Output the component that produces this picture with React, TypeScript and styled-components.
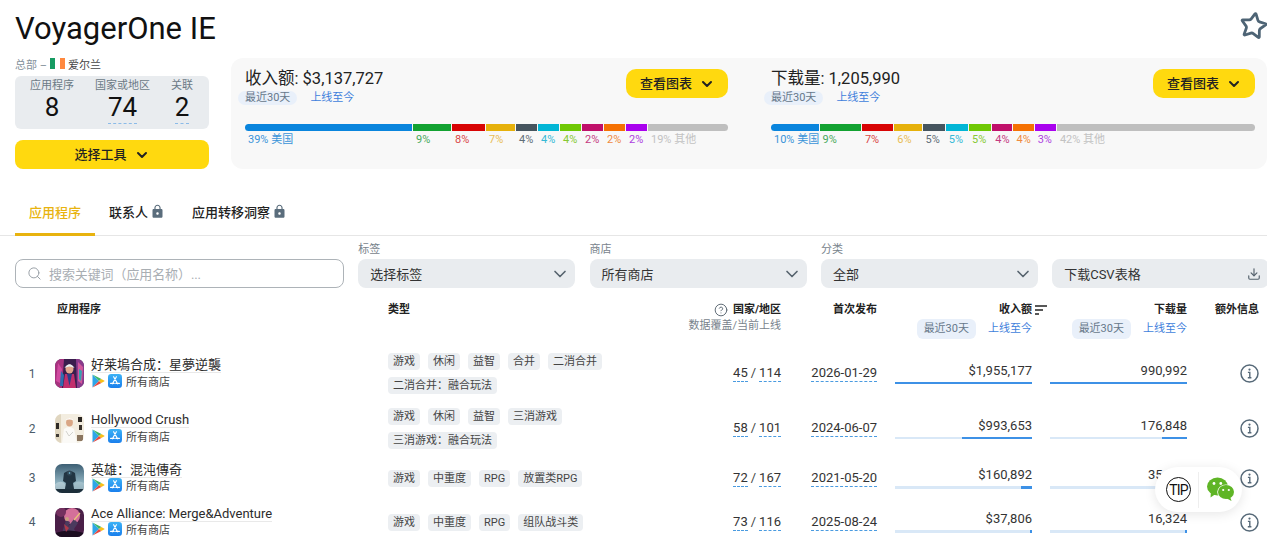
import React from 'react';
import styled, { createGlobalStyle } from 'styled-components';
import { ChevronDown, CircleHelp, Download, Search, Star } from 'lucide-react';
import { MdLock } from 'react-icons/md';

const GlobalStyle = createGlobalStyle`
    html, body {
        margin: 0;
        padding: 0;
        width: 1267px;
        height: 540px;
        overflow: hidden;
        background: #fff;
    }
    body {
        font-family: Roboto, "Noto Sans CJK SC", sans-serif;
        color: #222;
    }
    * {
        box-sizing: border-box;
    }
`;

interface ISegment {
    width: number;
    bar: string;
    text: string;
    label: string;
}

const palette = [
    ['#0a85dd', '#3a94d8'],
    ['#13a232', '#48a95c'],
    ['#d80505', '#d94545'],
    ['#e6b10c', '#e8bd55'],
    ['#46555f', '#5f6d77'],
    ['#02b6d6', '#35b9d6'],
    ['#6fc805', '#86c933'],
    ['#c0106a', '#c53a80'],
    ['#f57103', '#ef8a40'],
    ['#a902ee', '#ae3fe0'],
    ['#bfbfbf', '#c2c2c2'],
];

const makeSegments = (widths: number[], labels: string[]): ISegment[] =>
    widths.map((width, i) => ({ width, bar: palette[i][0], text: palette[i][1], label: labels[i] }));

const revenueSegments = makeSegments(
    [167, 38, 33, 29, 21, 21, 21, 21, 21, 21, 80],
    ['39% 美国', '9%', '8%', '7%', '4%', '4%', '4%', '2%', '2%', '2%', '19% 其他'],
);

const downloadSegments = makeSegments(
    [47, 41, 31, 27, 22, 22, 22, 20, 20, 21, 196],
    ['10% 美国', '9%', '7%', '6%', '5%', '5%', '5%', '4%', '4%', '3%', '42% 其他'],
);

interface IApp {
    name: string;
    tags: string[];
    live: string;
    total: string;
    date: string;
    revenue: string;
    revenueBar: number;
    downloads: string;
    downloadBar: number;
}

const apps: IApp[] = [
    {
        name: '好莱塢合成：星夢逆襲',
        tags: ['游戏', '休闲', '益智', '合并', '二消合并', '二消合并：融合玩法'],
        live: '45',
        total: '114',
        date: '2026-01-29',
        revenue: '$1,955,177',
        revenueBar: 137,
        downloads: '990,992',
        downloadBar: 137,
    },
    {
        name: 'Hollywood Crush',
        tags: ['游戏', '休闲', '益智', '三消游戏', '三消游戏：融合玩法'],
        live: '58',
        total: '101',
        date: '2024-06-07',
        revenue: '$993,653',
        revenueBar: 70,
        downloads: '176,848',
        downloadBar: 25,
    },
    {
        name: '英雄：混沌傳奇',
        tags: ['游戏', '中重度', 'RPG', '放置类RPG'],
        live: '72',
        total: '167',
        date: '2021-05-20',
        revenue: '$160,892',
        revenueBar: 11,
        downloads: '35,482',
        downloadBar: 5,
    },
    {
        name: 'Ace Alliance: Merge&Adventure',
        tags: ['游戏', '中重度', 'RPG', '组队战斗类'],
        live: '73',
        total: '116',
        date: '2025-08-24',
        revenue: '$37,806',
        revenueBar: 2,
        downloads: '16,324',
        downloadBar: 2,
    },
];

const PlayIcon = () => (
    <svg width="13" height="14" viewBox="0 0 13 14">
        <path d="M0.5 0.6 L7 7 L0.5 13.4 Z" fill="#2fa6e8" />
        <path d="M0.5 0.6 L9.4 5 L7 7 Z" fill="#3fb76a" />
        <path d="M0.5 13.4 L9.4 9 L7 7 Z" fill="#e8483f" />
        <path d="M9.4 5 L12.8 7 L9.4 9 L7 7 Z" fill="#f8c018" />
    </svg>
);

const AppStoreIcon = () => (
    <svg width="14" height="14" viewBox="0 0 14 14">
        <defs>
            <linearGradient id="storeBlue" x1="0" y1="0" x2="0" y2="1">
                <stop offset="0" stopColor="#3cb2f6" />
                <stop offset="1" stopColor="#1a7fec" />
            </linearGradient>
        </defs>
        <rect width="14" height="14" rx="3.2" fill="url(#storeBlue)" />
        <path
            d="M8.4 2.8 L4.4 9.8 M5.6 2.8 L9.6 9.8 M2.6 9.4 H6.2 M7.8 9.4 H11.4"
            stroke="#fff"
            strokeWidth="1.2"
            strokeLinecap="round"
        />
    </svg>
);

const InfoIcon = () => (
    <svg width="19" height="19" viewBox="0 0 19 19" fill="none">
        <circle cx="9.5" cy="9.5" r="8.5" stroke="#566978" strokeWidth="1.5" />
        <circle cx="9.5" cy="5.6" r="1.1" fill="#566978" />
        <path d="M7.9 8.4 H9.8 V13.6 M7.8 13.8 H11.4" stroke="#566978" strokeWidth="1.4" />
    </svg>
);

const SortIcon = () => (
    <svg width="12" height="10" viewBox="0 0 12 10">
        <path d="M0 1 H12 M0 5 H8 M0 9 H4" stroke="#222" strokeWidth="1.6" />
    </svg>
);

const WeChatIcon = () => (
    <svg width="28" height="25" viewBox="0 0 28 25">
        <ellipse cx="10.5" cy="9.5" rx="10.5" ry="9" fill="#5fb526" />
        <path d="M4 14 L3.5 20.5 L10 16 Z" fill="#5fb526" />
        <ellipse cx="19" cy="15" rx="8.8" ry="7.6" fill="#fff" />
        <ellipse cx="19" cy="15" rx="8" ry="7" fill="#5fb526" />
        <path d="M23 19.5 L24.5 24 L19 21 Z" fill="#5fb526" />
        <circle cx="7" cy="6.5" r="1.4" fill="#fff" />
        <circle cx="13.8" cy="6.5" r="1.4" fill="#fff" />
        <circle cx="16.2" cy="13" r="1.1" fill="#fff" />
        <circle cx="21.8" cy="13" r="1.1" fill="#fff" />
    </svg>
);

const IconOne = () => (
    <svg viewBox="0 0 29 29" width="29" height="29">
        <rect width="29" height="29" fill="#3a1d4d" />
        <path d="M0 0 H9 L7 29 H0 Z" fill="#a8327f" />
        <path d="M21 0 H29 V29 H22 Z" fill="#8a3a8c" />
        <path d="M3 4 L7 10 L5 24 L1 22 Z" fill="#d04aa0" />
        <path d="M23 3 L28 8 L27 25 L23 22 Z" fill="#d2589c" />
        <path d="M24 10 L27 12 L26 22 L24 20 Z" fill="#37a0b0" />
        <path d="M8 29 L10 15 H19 L21 29 Z" fill="#c22f6c" />
        <path d="M6 12 L9 16 L8 27 L5 27 Z" fill="#2f6fb0" />
        <ellipse cx="14.5" cy="10" rx="4" ry="4.6" fill="#e3a68d" />
        <path d="M9.5 9 Q14.5 1.5 19.5 9 Q14.5 6 9.5 9 Z" fill="#e7f2f5" />
        <path d="M12 15 L14.5 27 L17 15 Z" fill="#2d3f8a" />
    </svg>
);

const IconTwo = () => (
    <svg viewBox="0 0 29 29" width="29" height="29">
        <rect width="29" height="29" fill="#f3ede0" />
        <rect x="0" y="0" width="6" height="29" fill="#e0d6c0" />
        <rect x="23" y="3" width="4" height="5" fill="#2c2723" />
        <rect x="24" y="11" width="3" height="5" fill="#3a332c" />
        <rect x="1" y="9" width="3" height="6" fill="#2f2a25" />
        <rect x="1" y="20" width="3" height="3" fill="#3f3a34" />
        <rect x="22" y="21" width="6" height="6" fill="#8b7660" />
        <path d="M7 29 L9 15 Q14 11 19 15 L22 29 Z" fill="#fbfaf7" />
        <ellipse cx="14.5" cy="8.5" rx="3.4" ry="4" fill="#d9a685" />
        <path d="M10 6.5 Q14.5 1.5 19 6.5 Q14.5 4.5 10 6.5 Z" fill="#fff" />
        <path d="M11 17 L14 22 L18 18" stroke="#c9c9c4" strokeWidth="0.8" fill="none" />
    </svg>
);

const IconThree = () => (
    <svg viewBox="0 0 29 29" width="29" height="29">
        <defs>
            <linearGradient id="stormSky" x1="0" y1="0" x2="0" y2="1">
                <stop offset="0" stopColor="#3d5f74" />
                <stop offset="0.65" stopColor="#8fb2c0" />
                <stop offset="1" stopColor="#2b4555" />
            </linearGradient>
        </defs>
        <rect width="29" height="29" fill="url(#stormSky)" />
        <path d="M0 20 Q7 15 11 21 L9 29 H0 Z" fill="#b9d0d8" opacity="0.8" />
        <path d="M29 19 Q22 15 18 21 L20 29 H29 Z" fill="#a9c4ce" opacity="0.8" />
        <path d="M9 9 Q14.5 5 20 9 L21 17 L18 19 L19 25 H10 L11 19 L8 17 Z" fill="#223543" />
        <circle cx="14.5" cy="9" r="2.6" fill="#2f4656" />
        <circle cx="14.5" cy="9" r="0.8" fill="#7fd0ea" />
        <rect y="25" width="29" height="4" fill="#1c2e3a" />
    </svg>
);

const IconFour = () => (
    <svg viewBox="0 0 29 29" width="29" height="29">
        <rect width="29" height="29" fill="#4a1f48" />
        <circle cx="17" cy="8" r="8" fill="#d4709a" />
        <circle cx="6" cy="4" r="5" fill="#74305f" />
        <path d="M7 25 L11 12 L15 14 L13 19 L19 11 L23 15 L19 21 L22 27 H6 Z" fill="#4b3a5e" />
        <circle cx="12" cy="11" r="2" fill="#c8a080" />
        <path d="M19 12 L25 5" stroke="#e8c478" strokeWidth="1.2" />
        <path d="M0 25 Q14 20 29 25 V29 H0 Z" fill="#1c0d20" />
        <path d="M9 16 L14 20 L11 24 Z" fill="#b03a4a" />
    </svg>
);

const appIcons = [<IconOne key="1" />, <IconTwo key="2" />, <IconThree key="3" />, <IconFour key="4" />];

const Summary: React.FC<{ title: string; segments: ISegment[] }> = ({ title, segments }) => (
    <SummaryColumn>
        <SummaryHead>
            <div>
                <SummaryTitle>{title}</SummaryTitle>
                <PeriodRow>
                    <PeriodPill>最近30天</PeriodPill>
                    <PeriodLink>上线至今</PeriodLink>
                </PeriodRow>
            </div>
            <ChartButton>
                <ButtonText>查看图表</ButtonText>
                <ChevronDown size={16} strokeWidth={3} />
            </ChartButton>
        </SummaryHead>
        <ShareBar>
            {segments.map((segment, i) => (
                <ShareCell key={i} $width={segment.width}>
                    <ShareFill $color={segment.bar} $first={i === 0} $last={i === segments.length - 1} />
                    <ShareLabel $color={segment.text}>{segment.label}</ShareLabel>
                </ShareCell>
            ))}
        </ShareBar>
    </SummaryColumn>
);

const Metric: React.FC<{ value: string; width: number }> = ({ value, width }) => (
    <MetricCell>
        <MetricValue>{value}</MetricValue>
        <MetricTrack>
            <MetricFill style={{ width }} />
        </MetricTrack>
    </MetricCell>
);

const App: React.FC = () => (
    <Page>
        <GlobalStyle />
        <Header>
            <Title>VoyagerOne IE</Title>
            <StarButton>
                <Star size={29} strokeWidth={2.3} />
            </StarButton>
        </Header>

        <TopRow>
            <LeftColumn>
                <Location>
                    总部 –
                    <Flag>
                        <FlagStripe $color="#169b62" />
                        <FlagStripe $color="#fff" />
                        <FlagStripe $color="#ff883e" />
                    </Flag>
                    <LocationName>爱尔兰</LocationName>
                </Location>
                <Stats>
                    <Stat>
                        <StatLabel>应用程序</StatLabel>
                        <StatValue>8</StatValue>
                    </Stat>
                    <Stat>
                        <StatLabel>国家或地区</StatLabel>
                        <StatValue $dashed>74</StatValue>
                    </Stat>
                    <Stat>
                        <StatLabel>关联</StatLabel>
                        <StatValue $dashed>2</StatValue>
                    </Stat>
                </Stats>
                <ToolButton>
                    <ButtonText>选择工具</ButtonText>
                    <ChevronDown size={16} strokeWidth={3} />
                </ToolButton>
            </LeftColumn>
            <SummaryPanel>
                <Summary title="收入额: $3,137,727" segments={revenueSegments} />
                <Summary title="下载量: 1,205,990" segments={downloadSegments} />
            </SummaryPanel>
        </TopRow>

        <Tabs>
            <Tab $active>应用程序</Tab>
            <Tab>
                联系人
                <LockIcon size={15} />
            </Tab>
            <Tab>
                应用转移洞察
                <LockIcon size={15} />
            </Tab>
        </Tabs>

        <Filters>
            <SearchBox>
                <Search size={15} color="#9aa1a8" strokeWidth={1.6} />
                <SearchText>搜索关键词（应用名称）...</SearchText>
            </SearchBox>
            <Field>
                <FieldLabel>标签</FieldLabel>
                <SelectBox>
                    <SelectText>选择标签</SelectText>
                    <ChevronDown size={20} color="#56636e" />
                </SelectBox>
            </Field>
            <Field>
                <FieldLabel>商店</FieldLabel>
                <SelectBox>
                    <SelectText>所有商店</SelectText>
                    <ChevronDown size={20} color="#56636e" />
                </SelectBox>
            </Field>
            <Field>
                <FieldLabel>分类</FieldLabel>
                <SelectBox>
                    <SelectText>全部</SelectText>
                    <ChevronDown size={20} color="#56636e" />
                </SelectBox>
            </Field>
            <Field>
                <SelectBox>
                    <SelectText>下载CSV表格</SelectText>
                    <DownloadMark>
                        <Download size={14} color="#56636e" />
                    </DownloadMark>
                </SelectBox>
            </Field>
        </Filters>

        <HeaderRow>
            <div />
            <HeadApp>应用程序</HeadApp>
            <HeadCell>类型</HeadCell>
            <HeadRight>
                <HeadLine>
                    <CircleHelp size={14} color="#56636e" strokeWidth={1.6} />
                    国家/地区
                </HeadLine>
                <HeadNote>数据覆盖/当前上线</HeadNote>
            </HeadRight>
            <HeadRight>首次发布</HeadRight>
            <HeadRight>
                <HeadLine>
                    收入额
                    <SortMark>
                        <SortIcon />
                    </SortMark>
                </HeadLine>
                <HeadPeriods>
                    <HeadPill>最近30天</HeadPill>
                    <HeadLink>上线至今</HeadLink>
                </HeadPeriods>
            </HeadRight>
            <HeadRight>
                <HeadLine>下载量</HeadLine>
                <HeadPeriods>
                    <HeadPill>最近30天</HeadPill>
                    <HeadLink>上线至今</HeadLink>
                </HeadPeriods>
            </HeadRight>
            <HeadExtra>额外信息</HeadExtra>
        </HeaderRow>

        {apps.map((app, i) => (
            <AppRow key={app.name}>
                <Rank>{i + 1}</Rank>
                <AppCell>
                    <AppIconBox>{appIcons[i]}</AppIconBox>
                    <AppText>
                        <AppName>{app.name}</AppName>
                        <StoreRow>
                            <PlayIcon />
                            <AppStoreIcon />
                            <StoreName>所有商店</StoreName>
                        </StoreRow>
                    </AppText>
                </AppCell>
                <TagList>
                    {app.tags.map(tag => (
                        <Tag key={tag}>{tag}</Tag>
                    ))}
                </TagList>
                <CountCell>
                    <Dashed>{app.live}</Dashed>
                    <CountSlash>/</CountSlash>
                    <Dashed>{app.total}</Dashed>
                </CountCell>
                <CountCell>
                    <Dashed>{app.date}</Dashed>
                </CountCell>
                <Metric value={app.revenue} width={app.revenueBar} />
                <Metric value={app.downloads} width={app.downloadBar} />
                <InfoCell>
                    <InfoIcon />
                </InfoCell>
            </AppRow>
        ))}

        <FloatingTools>
            <TipBadge>TIP</TipBadge>
            <FloatingDivider />
            <WeChatIcon />
        </FloatingTools>
    </Page>
);

const Page = styled.div`
    position: relative;
    width: 1267px;
    height: 540px;
    overflow: hidden;
    background: #fff;
`;

const Header = styled.header`
    display: flex;
    justify-content: space-between;
    align-items: center;
    height: 58px;
    padding-left: 15px;
`;

const Title = styled.h1`
    margin: 0;
    font-size: 31px;
    font-weight: 400;
    line-height: 34px;
    color: #111;
`;

const StarButton = styled.div`
    display: flex;
    margin: -8px -1px 0 0;
    color: #4e6475;
    transform: rotate(10deg);
`;

const TopRow = styled.div`
    display: flex;
    gap: 22px;
    height: 111px;
    padding-left: 15px;
`;

const LeftColumn = styled.div`
    display: flex;
    flex-direction: column;
    width: 194px;
`;

const Location = styled.div`
    display: flex;
    align-items: center;
    gap: 3px;
    height: 18px;
    padding-bottom: 7px;
    font-size: 11px;
    color: #84919b;
`;

const LocationName = styled.span`
    color: #444;
`;

const Flag = styled.span`
    display: flex;
    height: 11px;
`;

const FlagStripe = styled.span<{ $color: string }>`
    width: 5px;
    background: ${props => props.$color};
`;

const Stats = styled.div`
    display: flex;
    justify-content: space-between;
    height: 53px;
    padding: 3px 16px 0 15px;
    background: #e9ecef;
    border-radius: 6px;
`;

const Stat = styled.div`
    display: flex;
    flex-direction: column;
    align-items: center;
`;

const StatLabel = styled.div`
    font-size: 11px;
    line-height: 14px;
    color: #6c7a86;
`;

const StatValue = styled.div<{ $dashed?: boolean }>`
    font-size: 26px;
    line-height: 29px;
    padding-bottom: 1px;
    color: #111;
    border-bottom: ${props => (props.$dashed ? '1px dashed #8bbbe8' : '1px solid transparent')};
`;

const ButtonText = styled.span`
    padding-bottom: 2px;
`;

const ToolButton = styled.div`
    display: flex;
    justify-content: center;
    align-items: center;
    gap: 7px;
    height: 29px;
    margin-top: 11px;
    font-size: 13px;
    font-weight: 500;
    color: #222;
    background: #ffd90f;
    border-radius: 8px;
`;

const SummaryPanel = styled.div`
    display: grid;
    grid-template-columns: 483px 484px;
    column-gap: 43px;
    flex: 1;
    padding: 11px 12px 0 14px;
    background: #f8f8f8;
    border-radius: 12px;
`;

const SummaryColumn = styled.div`
    display: flex;
    flex-direction: column;
`;

const SummaryHead = styled.div`
    display: flex;
    justify-content: space-between;
    align-items: flex-start;
    height: 55px;
`;

const SummaryTitle = styled.div`
    font-size: 16.5px;
    line-height: 19px;
    color: #222;
`;

const PeriodRow = styled.div`
    display: flex;
    align-items: center;
    gap: 13px;
    margin: 3px 0 0 -7px;
`;

const PeriodPill = styled.span`
    padding: 0 7px;
    font-size: 11px;
    line-height: 14px;
    color: #67788a;
    background: #e9f0fa;
    border-radius: 7px;
`;

const PeriodLink = styled.span`
    font-size: 11px;
    font-weight: 400;
    line-height: 14px;
    color: #3f7fdc;
`;

const ChartButton = styled.div`
    display: flex;
    align-items: center;
    justify-content: center;
    gap: 7px;
    width: 102px;
    height: 29px;
    padding-left: 1px;
    font-size: 13px;
    font-weight: 500;
    color: #222;
    background: #ffd90f;
    border-radius: 10px;
`;

const ShareBar = styled.div`
    display: flex;
    gap: 1px;
`;

const ShareCell = styled.div<{ $width: number }>`
    flex: ${props => props.$width} 1 0;
    min-width: 0;
`;

const ShareFill = styled.div<{ $color: string; $first: boolean; $last: boolean }>`
    height: 7px;
    background: ${props => props.$color};
    border-radius: ${props => (props.$first ? '4px 0 0 4px' : props.$last ? '0 4px 4px 0' : '0')};
`;

const ShareLabel = styled.div<{ $color: string }>`
    margin-top: 2px;
    padding-left: 3px;
    font-size: 11px;
    line-height: 14px;
    white-space: nowrap;
    color: ${props => props.$color};
`;

const Tabs = styled.nav`
    display: flex;
    height: 46px;
    margin-top: 21px;
    padding-left: 15px;
    border-bottom: 1px solid #e6e6e6;
`;

const Tab = styled.div<{ $active?: boolean }>`
    display: flex;
    align-items: center;
    gap: 4px;
    height: 46px;
    padding: 0 14px;
    font-size: 13px;
    font-weight: 500;
    color: ${props => (props.$active ? '#e8b30f' : '#222')};
    border-bottom: 3px solid ${props => (props.$active ? '#e8b30f' : 'transparent')};
`;

const LockIcon = styled(MdLock)`
    margin: 0 -1px 0 -2px;
    color: #5a6d7c;
`;

const Filters = styled.div`
    display: flex;
    align-items: flex-end;
    gap: 14.3px;
    height: 52px;
    padding-left: 15px;
`;

const SearchBox = styled.div`
    display: flex;
    align-items: center;
    gap: 7px;
    flex: 0 0 329px;
    height: 29px;
    padding-left: 11px;
    border: 1px solid #adb3b8;
    border-radius: 8px;
`;

const SearchText = styled.span`
    padding-bottom: 1px;
    font-size: 13px;
    letter-spacing: -0.1px;
    color: #a9aeb3;
`;

const Field = styled.div`
    flex: 0 0 217px;
`;

const FieldLabel = styled.div`
    font-size: 11px;
    line-height: 13px;
    margin-bottom: 3px;
    color: #78838c;
`;

const SelectBox = styled.div`
    display: flex;
    justify-content: space-between;
    align-items: center;
    height: 29px;
    padding: 0 5px 0 12px;
    font-size: 13px;
    color: #333;
    background: #e9ecef;
    border-radius: 8px;
`;

const SelectText = styled.span`
    padding-bottom: 1px;
`;

const DownloadMark = styled.span`
    display: flex;
    margin-right: 3px;
`;

const tableColumns = '40px 333px 300px 93px 96px 155px 155px 80px';

const HeaderRow = styled.div`
    display: grid;
    grid-template-columns: ${tableColumns};
    height: 43px;
    margin-top: 15px;
    padding-left: 15px;
`;

const HeadCell = styled.div`
    font-size: 11px;
    font-weight: 700;
    line-height: 13px;
    color: #222;
`;

const HeadApp = styled(HeadCell)`
    padding-left: 2px;
`;

const HeadRight = styled(HeadCell)`
    display: flex;
    flex-direction: column;
    align-items: flex-end;
`;

const HeadLine = styled.div`
    position: relative;
    display: flex;
    align-items: center;
    gap: 5px;
    height: 13px;
`;

const SortMark = styled.span`
    position: absolute;
    left: calc(100% + 3px);
    top: 2px;
    display: flex;
`;

const HeadNote = styled.div`
    margin-top: 3px;
    font-weight: 400;
    line-height: 13px;
    white-space: nowrap;
    color: #78838c;
`;

const HeadPeriods = styled.div`
    display: flex;
    align-items: center;
    gap: 12px;
    margin-top: 3px;
`;

const HeadPill = styled.span`
    padding: 0 7px;
    font-weight: 400;
    line-height: 20px;
    color: #67788a;
    background: #e9f0fa;
    border-radius: 6px;
`;

const HeadLink = styled(PeriodLink)`
    line-height: 20px;
`;

const HeadExtra = styled(HeadCell)`
    padding-right: 8px;
    text-align: right;
`;

const AppRow = styled.div`
    display: grid;
    grid-template-columns: ${tableColumns};
    align-items: center;
    min-height: 44px;
    padding-left: 15px;
`;

const Rank = styled.div`
    width: 34px;
    font-size: 12px;
    text-align: center;
    color: #4b5c6a;
`;

const AppCell = styled.div`
    display: flex;
    align-items: center;
    gap: 7px;
`;

const AppIconBox = styled.div`
    display: flex;
    width: 29px;
    height: 29px;
    overflow: hidden;
    border-radius: 7px;
`;

const AppText = styled.div`
    padding-bottom: 2px;
`;

const AppName = styled.div`
    display: table;
    font-size: 13px;
    line-height: 15px;
    color: #2b2b2b;
    border-bottom: 1px solid #e9e9e9;
`;

const StoreRow = styled.div`
    display: flex;
    align-items: center;
    gap: 3px;
    height: 15px;
    margin: 0 0 0 1px;
`;

const StoreName = styled.span`
    margin-left: 1px;
    font-size: 11px;
    color: #444;
`;

const TagList = styled.div`
    display: flex;
    flex-wrap: wrap;
    gap: 7px 8px;
    margin: 7px 0;
    padding-right: 20px;
`;

const Tag = styled.span`
    height: 17px;
    padding: 0 5px;
    font-size: 11px;
    line-height: 17px;
    color: #444;
    background: #eceff2;
    border-radius: 4px;
`;

const CountCell = styled.div`
    display: flex;
    justify-content: flex-end;
    gap: 3px;
    font-size: 13px;
    line-height: 15px;
    color: #333;
`;

const Dashed = styled.span`
    padding-bottom: 1px;
    border-bottom: 1px dashed #4a9be0;
`;

const CountSlash = styled.span`
    color: #444;
`;

const MetricCell = styled.div`
    display: flex;
    flex-direction: column;
    margin-left: 18px;
`;

const MetricValue = styled.div`
    font-size: 13px;
    line-height: 15px;
    text-align: right;
    color: #333;
`;

const MetricTrack = styled.div`
    display: flex;
    justify-content: flex-end;
    height: 2.5px;
    margin-top: 4px;
    background: #d9e8f7;
`;

const MetricFill = styled.div`
    background: #3d91e6;
`;

const InfoCell = styled.div`
    display: flex;
    justify-content: flex-end;
    padding-right: 8px;
`;

const FloatingTools = styled.div`
    position: absolute;
    left: 1155px;
    top: 467px;
    display: flex;
    align-items: center;
    width: 87px;
    height: 45px;
    padding-left: 11px;
    background: #fff;
    border-radius: 23px;
    box-shadow: 0 2px 12px rgba(0, 0, 0, 0.1);
`;

const TipBadge = styled.div`
    display: flex;
    justify-content: center;
    align-items: center;
    width: 25px;
    height: 25px;
    font-size: 14px;
    letter-spacing: -0.8px;
    color: #111;
    border: 1.5px solid #111;
    border-radius: 50%;
`;

const FloatingDivider = styled.div`
    width: 1px;
    height: 36px;
    margin: 0 8px 0 7px;
    background: #eee;
`;

export default App;
